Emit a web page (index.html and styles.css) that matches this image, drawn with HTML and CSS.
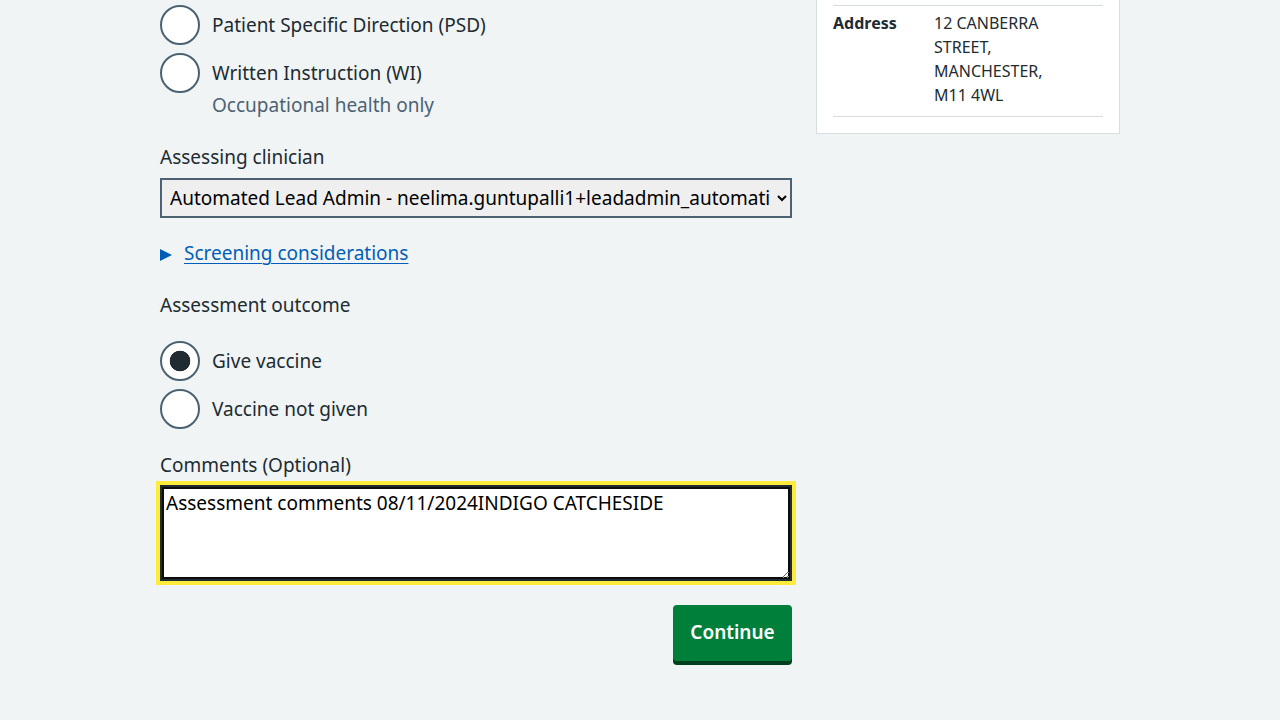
FILE: index.html
```html
<!DOCTYPE html>
<html lang="en">
<head>
<meta charset="utf-8">
<title>Assessment</title>
<link rel="stylesheet" href="styles.css">
</head>
<body>
<div class="page">
  <main class="main">
    <div class="radios">
      <div class="radio-item">
        <input class="radio" type="radio" name="direction" id="psd">
        <label class="radio-label" for="psd">Patient Specific Direction (PSD)</label>
      </div>
      <div class="radio-item">
        <input class="radio" type="radio" name="direction" id="wi">
        <label class="radio-label" for="wi">Written Instruction (WI)</label>
      </div>
      <div class="radio-hint">Occupational health only</div>
    </div>

    <div class="form-group">
      <label class="label" for="clinician">Assessing clinician</label>
      <select class="select" id="clinician">
        <option>Automated Lead Admin - neelima.guntupalli1+leadadmin_automation@nhs.net</option>
      </select>
    </div>

    <details class="details">
      <summary class="summary"><span class="summary-text">Screening considerations</span></summary>
    </details>

    <fieldset class="fieldset">
      <legend class="legend">Assessment outcome</legend>
      <div class="radios outcome">
        <div class="radio-item">
          <input class="radio" type="radio" name="outcome" id="give" checked>
          <label class="radio-label" for="give">Give vaccine</label>
        </div>
        <div class="radio-item">
          <input class="radio" type="radio" name="outcome" id="notgiven">
          <label class="radio-label" for="notgiven">Vaccine not given</label>
        </div>
      </div>
    </fieldset>

    <div class="form-group comments">
      <label class="label" for="comments">Comments (Optional)</label>
      <textarea class="textarea" id="comments" rows="3">Assessment comments 08/11/2024INDIGO CATCHESIDE</textarea>
    </div>

    <div class="actions">
      <button class="button" type="button">Continue</button>
    </div>
  </main>

  <aside class="side">
    <div class="card">
      <dl class="summary-list">
        <div class="summary-row">
          <dt class="summary-key">Address</dt>
          <dd class="summary-value">12 CANBERRA<br>STREET,<br>MANCHESTER,<br>M11 4WL</dd>
        </div>
      </dl>
    </div>
  </aside>
</div>
</body>
</html>
```

FILE: styles.css
```css
* { box-sizing: border-box; }

body {
  margin: 0;
  background: #f0f4f5;
  color: #212b32;
  font-family: "Noto Sans", "Open Sans", sans-serif;
  font-size: 19px;
  line-height: 28px;
}

.page {
  width: 960px;
  margin: 0 auto;
  display: flex;
  gap: 24px;
  align-items: flex-start;
}

.main {
  width: 632px;
  padding-top: 5px;
  padding-bottom: 40px;
  display: flex;
  flex-direction: column;
}

.side {
  width: 304px;
}

/* radios */
.radios {
  display: flex;
  flex-direction: column;
  gap: 8px;
}

.radio-item {
  display: flex;
  align-items: center;
  min-height: 40px;
}

.radio {
  appearance: none;
  -webkit-appearance: none;
  margin: 0;
  width: 40px;
  height: 40px;
  flex: none;
  border: 2px solid #4c6272;
  border-radius: 50%;
  background: #ffffff;
}

.radio:checked {
  background: radial-gradient(circle, #212b32 0 10px, #ffffff 10.6px);
}

.radio-label {
  padding: 0 12px;
}

.radio-hint {
  margin-top: -10px;
  padding-left: 52px;
  color: #4c6272;
}

/* groups */
.form-group {
  margin-top: 24px;
  display: flex;
  flex-direction: column;
}

.label {
  display: block;
  margin-bottom: 7px;
}

.select {
  width: 632px;
  height: 40px;
  border: 2px solid #4c6272;
  border-radius: 0;
  background: #efefef;
  color: #000000;
  font-family: inherit;
  font-size: 19px;
  padding: 0 4px 0 4px;
}

.details {
  margin-top: 21px;
}

.summary {
  list-style: none;
  display: flex;
  align-items: center;
  gap: 12px;
  color: #005eb8;
  cursor: pointer;
}

.summary::-webkit-details-marker { display: none; }

.summary::before {
  content: "";
  width: 0;
  height: 0;
  border-left: 12px solid #005eb8;
  border-top: 6.5px solid transparent;
  border-bottom: 6.5px solid transparent;
  margin-top: 4px;
}

.summary-text {
  text-decoration: underline;
  text-underline-offset: 3px;
  text-decoration-thickness: 1px;
}

.fieldset {
  margin: 24px 0 0;
  padding: 0;
  border: 0;
  min-width: 0;
}

.legend {
  padding: 0;
  margin-bottom: 22px;
  float: left;
  width: 100%;
}

.outcome {
  clear: both;
}

.comments {
  margin-top: 22px;
}

.comments .label {
  margin-bottom: 6px;
}

.textarea {
  display: block;
  width: 632px;
  height: 96px;
  resize: vertical;
  border: 2px solid #212b32;
  box-shadow: inset 0 0 0 2px #0b0c0c;
  outline: 4px solid #ffeb3b;
  outline-offset: 0;
  border-radius: 0;
  background: #ffffff;
  color: #000000;
  font-family: inherit;
  font-size: 19px;
  line-height: 24px;
  padding: 4px;
}

.actions {
  margin-top: 24px;
  display: flex;
  justify-content: flex-end;
}

.button {
  appearance: none;
  -webkit-appearance: none;
  display: inline-block;
  width: 119px;
  height: 56px;
  background-color: #007f3b;
  color: #ffffff;
  border: 0;
  border-radius: 4px;
  box-shadow: 0 4px 0 0 #00401e;
  font-family: inherit;
  font-size: 19px;
  font-weight: 600;
  line-height: 28px;
  padding: 0 16px 2px;
  cursor: pointer;
}

/* card */
.card {
  margin-top: -12px;
  background: #ffffff;
  border: 1px solid #d8dde0;
  padding: 16px;
}

.summary-list {
  margin: 0;
  font-size: 16px;
  line-height: 24px;
}

.summary-row {
  display: flex;
  border-top: 1px solid #d8dde0;
  border-bottom: 1px solid #d8dde0;
  padding: 5px 0 9px;
}

.summary-key {
  width: 101px;
  font-weight: 700;
  margin: 0;
}

.summary-value {
  margin: 0;
}
```
